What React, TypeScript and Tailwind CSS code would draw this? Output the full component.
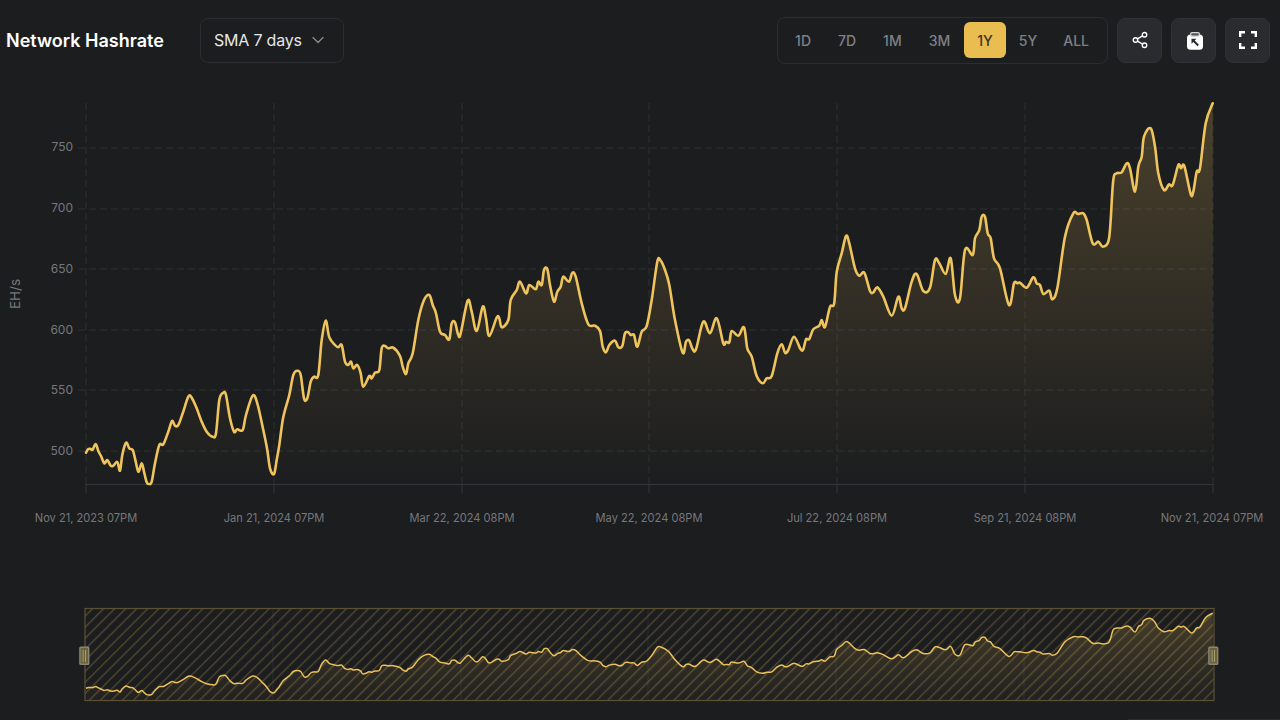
import React from "react";
import { ChevronDown, Share2 } from "lucide-react";

const P: [number, number][] = [
[86,452.7],[88.3,449],[90.7,449],[92.7,449.7],[95.7,444],[98.3,451],[101,456],[104.3,463.3],[107.3,460],[110.7,465.7],[113.3,465.7],[117.3,462],[120,470.7],[122.3,455],[126,442.7],[129.3,448.3],[132.7,450],[135,458.3],[138.3,471.7],[141.7,463.3],[144,471.7],[146.7,482.3],[149,484],[151.7,481.7],[155,463.3],[159.3,445],[163.3,444.3],[168.3,431.7],[172,421],[175,425.7],[178.3,425],[182.7,413.3],[188.3,396.7],[191.7,397.7],[196.7,408.3],[201.7,421.7],[206.7,431.7],[212.7,436.7],[216,433.3],[219.3,400],[223.3,392.7],[226,395],[230,418.3],[234,431.7],[237.3,429.3],[242.7,430],[246,415],[252.7,395.7],[257.3,403.3],[263.3,430],[267.3,450],[270,468.3],[274,474],[276.7,460],[279.3,445],[283.3,417],[289.3,395],[293.3,375],[297.3,370.7],[300.7,375],[304,398.3],[307.3,398.3],[310.7,381.7],[314,376.7],[318.3,375],[321.7,340],[325.7,320.7],[329.3,337.3],[335,345],[338.3,347.3],[341.7,345],[345,361.7],[348.3,365],[351,361.7],[353.3,368.3],[357.3,365],[360.7,373.3],[363.3,386.7],[369.3,376],[371.7,378.3],[375,372.7],[379.3,370],[381.7,348.3],[385,346],[388.3,348.3],[393.3,347.7],[400,356],[402.7,366.7],[406,374],[408.3,363.3],[412.7,353.3],[418.3,320],[424,300],[429.3,295],[432.7,305],[436,313.3],[440,331.7],[445,335],[449.3,339.3],[451.7,323.3],[455,322.3],[458.3,335],[460.7,333.3],[467.7,300.7],[471.7,311.7],[476.7,331],[482.7,306.7],[486,318.3],[489.3,336],[496.7,317.7],[499.3,318.3],[501.7,327.3],[508.3,320],[510.7,300],[516.7,290],[520,281.7],[526,293.3],[529.3,285],[535.7,289.3],[538.3,281.7],[541.7,285],[544,270],[547.3,269],[550,285],[554,301.7],[557.3,291.7],[560.7,286.7],[563.3,276.7],[569,281.7],[572.3,272.7],[575.7,276.7],[581.7,303.3],[588.3,324.3],[595,325.7],[600,331],[602.7,346.7],[606,352.3],[609.3,345],[615,340.7],[618.3,347.3],[622.3,346],[625,333.3],[628.3,332.3],[630.7,335],[634,335],[637.3,346.7],[641.7,331.7],[646.7,326],[651.7,300],[657.3,261.7],[660.7,260.7],[665,270],[669.3,285],[675,320],[682.7,352.7],[686,341.7],[689.3,340.7],[692.7,349.3],[696,349.3],[703.3,321.7],[710,333.3],[716.7,318.3],[723.3,343.3],[726,341.7],[729.3,342.3],[731.7,331],[738.3,335.7],[744,327.3],[747.3,348.3],[751.7,356.7],[756.7,376],[762.7,383.3],[766.7,378.3],[771.7,376],[777.3,353.3],[781.7,344.3],[785,352.7],[788.3,350],[794,336.7],[800.7,349.3],[803.3,349.3],[806,339.3],[809.3,339],[813.3,329.3],[819.3,325.7],[821.7,320],[825,327],[830,307],[834.2,303.3],[836.7,272],[841.7,253.3],[846,236],[849.3,243.3],[855,268.3],[859.3,275.7],[864.3,272.7],[870,291],[873.3,292.3],[877.3,287.3],[883.3,296.7],[891.7,315.7],[898.3,296.7],[901.7,308.3],[905,308.3],[911.7,281.7],[916.7,274],[923.3,291],[930,287.7],[935,260],[939.3,263.3],[945.7,274],[950.7,258.3],[955,295],[960,298.3],[965,250],[972.7,255],[975,238.3],[979.3,230],[981.7,216.7],[985,216.7],[987.7,233.3],[990.7,238.3],[994,258.3],[1000,268.3],[1009,305],[1014,283.3],[1017.3,283.3],[1020,282.7],[1026.7,287.7],[1033.3,277.3],[1036.7,283.3],[1040,285],[1043.3,294],[1049.3,290.7],[1052.3,299.3],[1057.3,288.3],[1065,236.7],[1073.3,213.3],[1078,214],[1083.3,213.3],[1086.7,220],[1092.7,243.3],[1098.3,241.7],[1102.7,246.7],[1108.3,241.7],[1110.5,223],[1113.3,180],[1116.7,173.3],[1121.7,172.3],[1126.7,163.3],[1130,168.3],[1135,191.7],[1138.3,166.7],[1141.7,156.7],[1144,136.7],[1150.7,128.3],[1155,146.7],[1158.3,173.3],[1164,190],[1169,184.3],[1172.7,185],[1178.3,165],[1181,168.3],[1184.3,166],[1190.7,194],[1193.3,191.7],[1196.7,171.7],[1200,168.3],[1205.7,123.3],[1212.7,103.3],
];

function smooth(pts: [number, number][]) {
  let d = `M${pts[0][0]},${pts[0][1]}`;
  for (let i = 0; i < pts.length - 1; i++) {
    const p0 = pts[Math.max(0, i - 1)];
    const p1 = pts[i];
    const p2 = pts[i + 1];
    const p3 = pts[Math.min(pts.length - 1, i + 2)];
    const k = 0.17;
    d += `C${(p1[0] + (p2[0] - p0[0]) * k).toFixed(1)},${(p1[1] + (p2[1] - p0[1]) * k).toFixed(1)} ${(p2[0] - (p3[0] - p1[0]) * k).toFixed(1)},${(p2[1] - (p3[1] - p1[1]) * k).toFixed(1)} ${p2[0]},${p2[1]}`;
  }
  return d;
}

const TOP = 80;
const mainPts = P.map(([x, y]) => [x, y - TOP] as [number, number]);
const mainLine = smooth(mainPts);
const mainArea = `${mainLine}L1212.7,${484 - TOP}L86,${484 - TOP}Z`;

const MTOP = 590;
const miniPts = P.map(([x, y]) => [x, +(613 + (y - 103) * (82 / 381) - MTOP).toFixed(1)] as [number, number]);
const miniLine = smooth(miniPts);
const miniArea = `${miniLine}L1212.7,110L86,110Z`;

const xTicks = [86, 274, 462, 649, 837, 1025, 1213];
const xLabels: [number, string][] = [
  [86, "Nov 21, 2023 07PM"],
  [274, "Jan 21, 2024 07PM"],
  [462, "Mar 22, 2024 08PM"],
  [649, "May 22, 2024 08PM"],
  [837, "Jul 22, 2024 08PM"],
  [1025, "Sep 21, 2024 08PM"],
  [1212, "Nov 21, 2024 07PM"],
];
const yTicks: [number, string, number][] = [
  [148, "750", 3],
  [209, "700", 3],
  [269, "650", 3.5],
  [330, "600", 3.5],
  [390, "550", 4],
  [451, "500", 4],
];
const ranges = ["1D", "7D", "1M", "3M", "1Y", "5Y", "ALL"];

function SquareButton({ children }: { children: React.ReactNode }) {
  return (
    <button className="flex h-[45px] w-[45px] items-center justify-center rounded-lg border border-[#303136] bg-[#2a2b2f] text-white">
      {children}
    </button>
  );
}

export default function App() {
  return (
    <div className="h-[720px] w-[1280px] overflow-hidden bg-[#1c1d1f] font-['Inter',sans-serif]">
      <header className="flex h-[80px] items-center pl-[6px] pr-[10px]">
        <h1 className="w-[194px] text-[18px] font-semibold text-white">Network Hashrate</h1>
        <button className="flex h-[45px] w-[144px] items-center gap-[6px] rounded-lg border border-[#2c2d31] pl-[13px] text-[16px] tracking-[-0.2px] text-[#e6e6e8]">
          SMA 7 days
          <ChevronDown size={20} strokeWidth={1.5} className="text-[#8b8c90]" />
        </button>
        <div className="ml-auto mr-[9px] flex h-[47px] items-center rounded-lg border border-[#2c2d31] pl-[4px] pr-[5px]">
          {ranges.map((r, i) => (
            <span
              key={r}
              className={
                r === "1Y"
                  ? "flex h-[36px] items-center rounded-md bg-[#e9bd50] px-[13px] text-[14px] font-medium text-[#3a3728]"
                  : i < 4
                    ? "mr-px flex h-[36px] items-center px-[13px] text-[14px] font-medium text-[#7f8085]"
                    : "flex h-[36px] items-center px-[13px] text-[14px] font-medium text-[#7f8085]"
              }
            >
              {r}
            </span>
          ))}
        </div>
        <div className="flex gap-[9px]">
          <SquareButton>
            <Share2 size={18} strokeWidth={1.8} />
          </SquareButton>
          <SquareButton>
            <svg width="16" height="18" viewBox="0 0 16 18" className="ml-[3px] mt-[1px]">
              <rect x="0" y="2.6" width="16" height="15.2" rx="3.5" fill="#fff" />
              <rect x="3.6" y="0.6" width="8.8" height="3.6" rx="1.4" fill="#55565a" stroke="#d8d8da" strokeWidth="1.2" />
              <path d="M4.5 6.8h5l-1.8 1.8 4.2 4.2-1.4 1.4-4.2-4.2-1.8 1.8z" fill="#2a2b2f" />
            </svg>
          </SquareButton>
          <SquareButton>
            <svg width="18" height="18" viewBox="0 0 18 18" fill="none" stroke="#fff" strokeWidth="2.4">
              <path d="M1.2 6V1.2H6M12 1.2h4.8V6M16.8 12v4.8H12M6 16.8H1.2V12" />
            </svg>
          </SquareButton>
        </div>
      </header>

      <svg width="1280" height="510" className="block font-['Inter',sans-serif]">
        <defs>
          <linearGradient id="mainFill" gradientUnits="userSpaceOnUse" x1="0" y1={103 - TOP} x2="0" y2={484 - TOP}>
            <stop offset="0" stopColor="#eec05a" stopOpacity="0.22" />
            <stop offset="1" stopColor="#eec05a" stopOpacity="0" />
          </linearGradient>
        </defs>
        {xTicks.map((x) => (
          <line key={x} x1={x} x2={x} y1={103 - TOP} y2={484 - TOP} stroke="#2f3033" strokeDasharray="7 4" />
        ))}
        {yTicks.map(([y]) => (
          <line key={y} x1={78} x2={1213} y1={y - TOP} y2={y - TOP} stroke="#2f3033" strokeDasharray="7 4" />
        ))}
        <path d={mainArea} fill="url(#mainFill)" />
        <line x1={86} x2={1213} y1={484.5 - TOP} y2={484.5 - TOP} stroke="#36373a" />
        {xTicks.map((x) => (
          <line key={x} x1={x} x2={x} y1={484 - TOP} y2={493 - TOP} stroke="#36373a" />
        ))}
        <path d={mainLine} fill="none" stroke="#efc45c" strokeWidth="2.6" strokeLinejoin="round" strokeLinecap="round" />
        {yTicks.map(([y, t, o]) => (
          <text key={t} x={73} y={y - TOP + o} textAnchor="end" fontSize="12" fill="#77787c">{t}</text>
        ))}
        {xLabels.map(([x, t]) => (
          <text key={t} x={x} y={522 - TOP} textAnchor="middle" fontSize="11.1" fill="#77787c">{t}</text>
        ))}
        <text x={0} y={0} transform={`translate(19.5 ${294 - TOP}) rotate(-90)`} textAnchor="middle" fontSize="13.5" fill="#77787c">EH/s</text>
      </svg>

      <svg width="1280" height="130" className="block">
        <defs>
          <linearGradient id="miniFill" x1="0" y1="0" x2="0" y2="1">
            <stop offset="0" stopColor="#eec05a" stopOpacity="0.2" />
            <stop offset="1" stopColor="#eec05a" stopOpacity="0.02" />
          </linearGradient>
          <pattern id="hatch" patternUnits="userSpaceOnUse" width="7.8" height="7.8" patternTransform="rotate(45)">
            <rect width="1.3" height="7.8" fill="#e9c25c" fillOpacity="0.27" />
          </pattern>
        </defs>
        {xTicks.slice(1, 6).map((x) => (
          <line key={x} x1={x - 1} x2={x - 1} y1={20} y2={110} stroke="#2b2c30" />
        ))}
        <path d={miniArea} fill="url(#miniFill)" />
        <path d={miniLine} fill="none" stroke="#e9c05c" strokeWidth="1.5" strokeLinejoin="round" />
        <rect x={85} y={19} width={1129} height={91} fill="url(#hatch)" />
        <rect x={85} y={18.5} width={1129} height={92} fill="none" stroke="#5b5236" strokeWidth="1.2" />
        {[84.3, 1213.3].map((x) => (
          <g key={x}>
            <rect x={x - 4.4} y={57.3} width={8.8} height={17} rx={0.8} fill="#6d6236" stroke="#85857c" strokeWidth="1.4" />
            <line x1={x - 1.2} x2={x - 1.2} y1={60} y2={72} stroke="#b0aa88" strokeWidth="0.8" />
            <line x1={x + 1.2} x2={x + 1.2} y1={60} y2={72} stroke="#b0aa88" strokeWidth="0.8" />
          </g>
        ))}
        <line x1={1128} x2={1280} y1={129.5} y2={129.5} stroke="#2c2d31" />
      </svg>
    </div>
  );
}
